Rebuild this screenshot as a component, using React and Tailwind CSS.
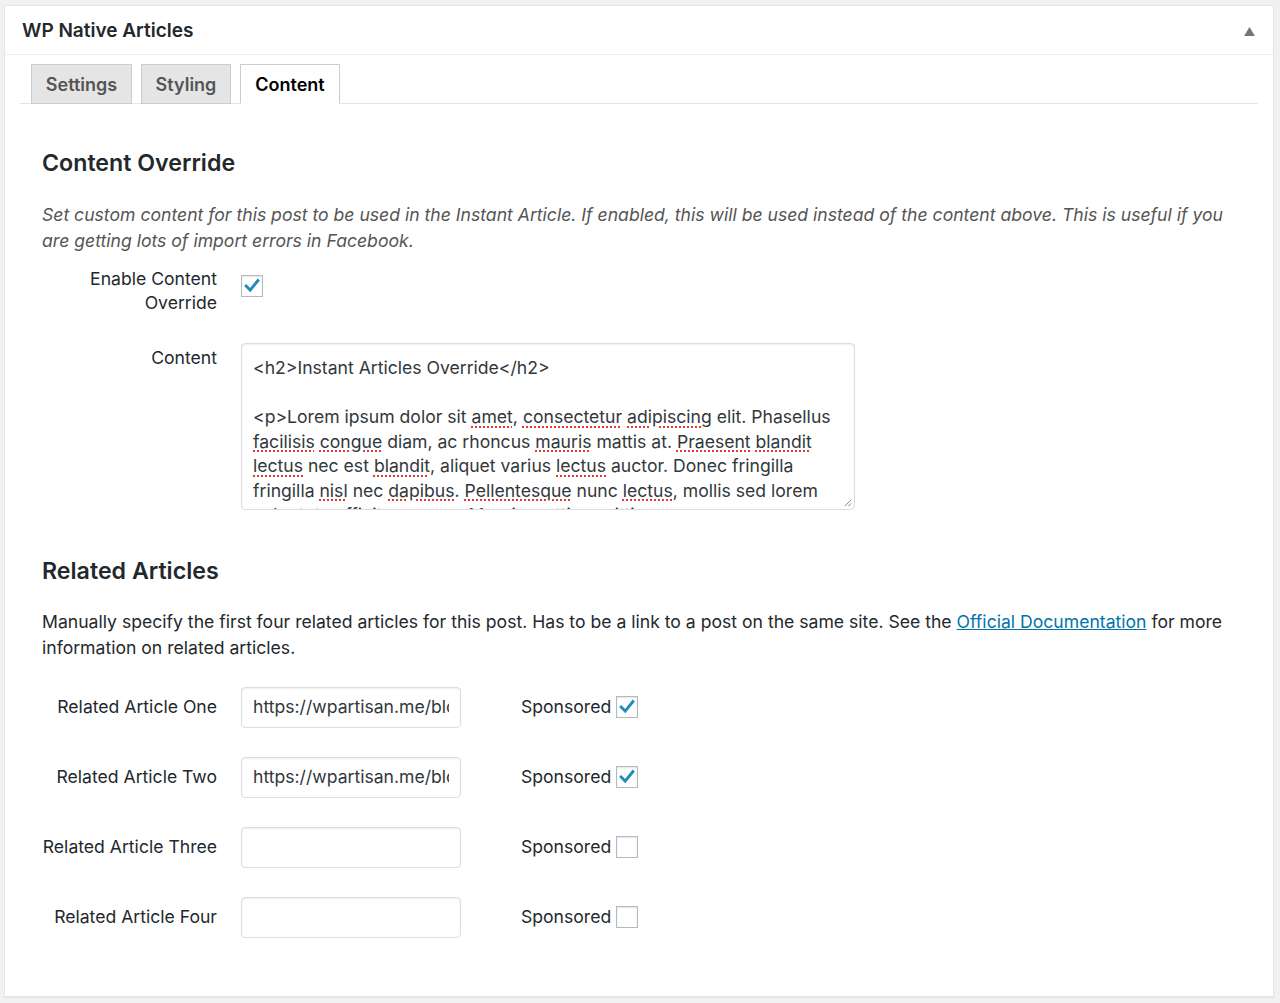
import React from "react";

const font = { fontFamily: "Inter, 'Noto Sans', sans-serif" };

function Check({ checked }) {
  return (
    <span className="inline-flex h-[22px] w-[22px] items-center justify-center border border-[#b4b9be] bg-white shadow-[inset_0_1px_2px_rgba(0,0,0,0.1)]">
      {checked && (
        <svg viewBox="0 0 20 20" className="h-[18px] w-[18px]">
          <path d="M3.5 10 L8 14.5 L16.5 4" fill="none" stroke="#1e8cbe" strokeWidth="3.2" strokeLinecap="square" />
        </svg>
      )}
    </span>
  );
}

function Sq({ children }) {
  return <span className="underline decoration-dotted decoration-[#e53935] decoration-2 underline-offset-[3px]">{children}</span>;
}

const rows = [
  { label: "Related Article One", value: "https://wpartisan.me/blog/", checked: true },
  { label: "Related Article Two", value: "https://wpartisan.me/blog/", checked: true },
  { label: "Related Article Three", value: "", checked: false },
  { label: "Related Article Four", value: "", checked: false },
];

export default function App() {
  return (
    <div className="min-h-[1003px] bg-[#f1f1f1] pt-[5px] pl-[4px] pr-[6px] pb-[6px] text-[#23282d]" style={font}>
      <div className="border border-[#e5e5e5] bg-white h-[992px] shadow-[0_1px_1px_rgba(0,0,0,0.04)]">
        <div className="flex h-[49px] items-center justify-between border-b border-[#eeeeee] pl-[17px] pr-[18px] pt-[3px]">
          <h2 className="text-[19px] font-semibold text-[#23282d]">WP Native Articles</h2>
          <svg viewBox="0 0 12 10" className="h-[9px] w-[11px]">
            <path d="M6 0 L12 10 L0 10 Z" fill="#72777c" />
          </svg>
        </div>
        <div className="px-[15px] pt-[9px]">
          <div className="flex items-end gap-[9px] border-b border-[#e5e5e5] pl-[11px]">
            <div className="-mb-px flex h-[40px] w-[101px] items-center justify-center border border-[#cccccc] bg-[#e5e5e5] text-[18px] font-semibold text-[#555555]">Settings</div>
            <div className="-mb-px flex h-[40px] w-[90px] items-center justify-center border border-[#cccccc] bg-[#e5e5e5] text-[18px] font-semibold text-[#555555]">Styling</div>
            <div className="-mb-px flex h-[40px] w-[100px] items-center justify-center border border-[#cccccc] border-b-white bg-white text-[18px] font-semibold text-[#000000]">Content</div>
          </div>

          <div className="pl-[22px] pr-[20px] text-[17.6px]">
            <h3 className="mt-[45px] text-[23.2px] leading-[28px] font-semibold text-[#23282d]">Content Override</h3>
            <p className="mt-[25px] leading-[26px] italic text-[#555555]">
              Set custom content for this post to be used in the Instant Article. If enabled, this will be used instead of the content above. This is useful if you are getting lots of import errors in Facebook.
            </p>

            <div className="mt-[13px] flex">
              <div className="w-[175px] text-right leading-[24px]">Enable Content<br />Override</div>
              <div className="ml-[24px] pt-[8px]"><Check checked /></div>
            </div>

            <div className="mt-[28px] flex">
              <div className="w-[175px] pt-[3px] text-right leading-[24px]">Content</div>
              <div className="relative ml-[24px] h-[167px] w-[614px] overflow-hidden rounded-[4px] border border-[#dddddd] bg-white px-[11px] pt-[12px] leading-[24.5px] text-[#32373c] shadow-[inset_0_1px_2px_rgba(0,0,0,0.07)] whitespace-nowrap">
                <div>&lt;h2&gt;Instant Articles Override&lt;/h2&gt;</div>
                <div>&nbsp;</div>
                <div>&lt;p&gt;Lorem ipsum dolor sit <Sq>amet</Sq>, <Sq>consectetur</Sq> <Sq>adipiscing</Sq> elit. Phasellus</div>
                <div><Sq>facilisis</Sq> <Sq>congue</Sq> diam, ac rhoncus <Sq>mauris</Sq> mattis at. <Sq>Praesent</Sq> <Sq>blandit</Sq></div>
                <div><Sq>lectus</Sq> nec est <Sq>blandit</Sq>, aliquet varius <Sq>lectus</Sq> auctor. Donec fringilla</div>
                <div>fringilla <Sq>nisl</Sq> nec <Sq>dapibus</Sq>. <Sq>Pellentesque</Sq> nunc <Sq>lectus</Sq>, mollis sed lorem</div>
                <div><Sq>vulputate</Sq> <Sq>efficitur</Sq> ornare. Mauris mattis sagittis</div>
                <svg viewBox="0 0 10 10" className="absolute bottom-[2px] right-[2px] h-[9px] w-[9px]">
                  <path d="M9 2 L2 9 M9 6 L6 9" stroke="#777" strokeWidth="1" fill="none" />
                </svg>
              </div>
            </div>

            <h3 className="mt-[47px] text-[23.2px] leading-[28px] font-semibold text-[#23282d]">Related Articles</h3>
            <p className="mt-[24px] leading-[26px] text-[#23282d]">
              Manually specify the first four related articles for this post. Has to be a link to a post on the same site. See the{" "}
              <a className="text-[#0073aa] underline">Official Documentation</a> for more information on related articles.
            </p>

            <div className="mt-[26px] flex flex-col gap-[29px]">
              {rows.map((r) => (
                <div key={r.label} className="flex items-center">
                  <div className="w-[175px] whitespace-nowrap text-right text-[#23282d]">{r.label}</div>
                  <div className="ml-[24px] h-[41px] w-[220px] rounded-[4px] border border-[#dddddd] bg-white px-[11px] shadow-[inset_0_1px_2px_rgba(0,0,0,0.07)]">
                    <div className="flex h-full items-center overflow-hidden whitespace-nowrap text-[#32373c]">{r.value}</div>
                  </div>
                  <div className="ml-[60px] flex items-center gap-[5px] text-[#23282d]">
                    <span>Sponsored</span>
                    <Check checked={r.checked} />
                  </div>
                </div>
              ))}
            </div>
          </div>
        </div>
      </div>
    </div>
  );
}
